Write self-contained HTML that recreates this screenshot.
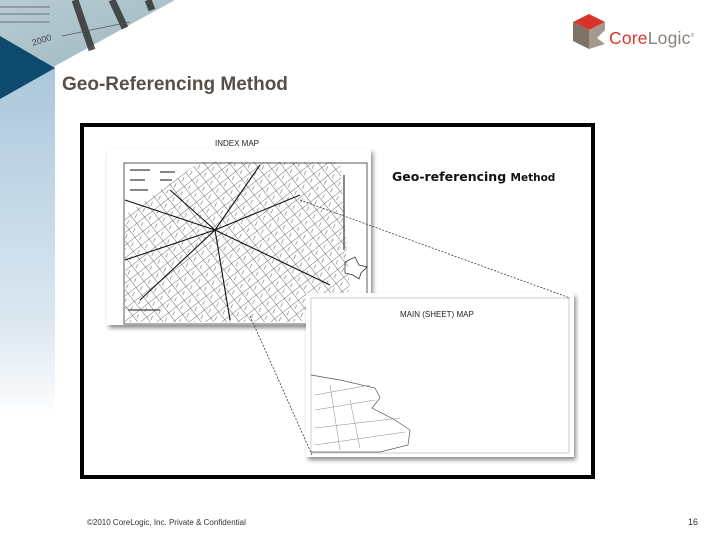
<!DOCTYPE html>
<html><head><meta charset="utf-8"><style>
*{margin:0;padding:0}
body{width:720px;height:540px;position:relative;overflow:hidden;background:#fff;font-family:"Liberation Sans",sans-serif}
.abs{position:absolute}
</style></head><body>
<svg class="abs" style="left:0;top:0" width="720" height="540">
<defs>
<linearGradient id="lb" x1="0" y1="0" x2="0" y2="1">
<stop offset="0" stop-color="#a9c6db"/><stop offset="0.55" stop-color="#dce8f1"/><stop offset="0.75" stop-color="#ffffff"/></linearGradient>
<linearGradient id="ph" x1="0" y1="0" x2="1" y2="1">
<stop offset="0" stop-color="#b7cbd2"/><stop offset="1" stop-color="#9fb8c0"/></linearGradient>
<pattern id="grid" width="10" height="10" patternUnits="userSpaceOnUse" patternTransform="rotate(-38)">
<path d="M0 0H10M0 0V10" stroke="#333" stroke-width="0.8" fill="none"/><path d="M2 5l4 -2" stroke="#555" stroke-width="0.6"/></pattern>
<filter id="sh"><feDropShadow dx="2" dy="3" stdDeviation="2" flood-color="#000" flood-opacity="0.45"/></filter>
</defs>
<rect x="0" y="60" width="55" height="480" fill="url(#lb)"/>
<polygon points="0,0 175,0 55,66 0,40" fill="url(#ph)"/>
<g stroke="#333" stroke-width="7" opacity="0.85"><line x1="75" y1="0" x2="92" y2="50"/><line x1="112" y1="0" x2="125" y2="28"/><line x1="148" y1="0" x2="152" y2="10"/></g>
<g stroke="#556" stroke-width="0.7" fill="none"><line x1="0" y1="7" x2="50" y2="7"/><line x1="0" y1="14" x2="50" y2="14"/><line x1="0" y1="22" x2="50" y2="22"/><line x1="62" y1="36" x2="130" y2="22"/></g>
<text x="33" y="46" font-size="9" fill="#445" transform="rotate(-18 33 46)">2000</text>
<polygon points="0,36 55,68 0,99" fill="#0d4a6e"/>
<rect x="82" y="125" width="511" height="352" fill="#fff" stroke="#000" stroke-width="4"/>
<text x="215" y="146" font-size="8" fill="#222">INDEX MAP</text>
<g filter="url(#sh)"><rect x="107" y="149" width="264" height="176" fill="#fff"/></g>
<rect x="124" y="163" width="243" height="161" fill="none" stroke="#333" stroke-width="0.8"/>
<polygon points="125,215 200,162 340,162 350,290 300,322 125,322" fill="url(#grid)" opacity="0.9"/>
<g stroke="#111" stroke-width="1.1" fill="none"><path d="M125,260 L215,230 L300,195 M170,190 L215,230 L230,320 M140,300 L215,230 L330,285 M125,200 L215,230 M260,165 L215,230"/></g>
<g stroke="#555" stroke-width="2" opacity="0.7"><line x1="130" y1="170" x2="150" y2="170"/><line x1="130" y1="180" x2="145" y2="180"/><line x1="130" y1="190" x2="148" y2="190"/><line x1="160" y1="172" x2="175" y2="172"/><line x1="160" y1="180" x2="172" y2="180"/><line x1="344" y1="175" x2="344" y2="250"/><line x1="128" y1="310" x2="160" y2="310"/></g>
<path d="M345,262 l10,-5 l4,8 l8,2 l-6,6 l-2,6 l-6,-4 l-8,-2z" fill="none" stroke="#333" stroke-width="0.8"/>
<text x="392" y="181" font-size="12.5" font-weight="bold" fill="#111" font-family="'DejaVu Sans',sans-serif">Geo-referencing <tspan font-size="10.5">Method</tspan></text>
<g filter="url(#sh)"><rect x="306" y="293" width="268" height="164" fill="#fff"/></g>
<rect x="311" y="298" width="258" height="155" fill="none" stroke="#aaa" stroke-width="0.6"/>
<text x="400" y="317" font-size="8" fill="#222">MAIN (SHEET) MAP</text>
<path d="M311,375 L340,380 L375,388 L380,398 L372,408 L395,420 L410,430 L408,445 L380,452 L311,452" fill="none" stroke="#555" stroke-width="0.7"/>
<g stroke="#888" stroke-width="0.5" fill="none"><path d="M315,395 L370,385 M315,410 L375,400 M315,428 L400,418 M330,385 L340,450 M350,400 L360,448 M315,445 L405,432"/></g>
<g stroke="#222" stroke-width="0.7" stroke-dasharray="2,1.5" fill="none"><line x1="300" y1="200" x2="570" y2="298"/><line x1="250" y1="316" x2="312" y2="455"/></g>
<polygon points="589,14 605,22 589,30 573,22" fill="#d9342b"/>
<polygon points="573,22 589,30 589,49 573,41" fill="#7d7468"/>
<polygon points="589,30 605,22 605,30 597,38 605,44 589,49" fill="#a49a8c"/>
</svg>
<div class="abs" style="left:609px;top:28px;font-size:17.5px;color:#d9342b;letter-spacing:0.2px">Core<span style="color:#8a8178">Logic</span><sup style="font-size:5px;color:#8a8178">®</sup></div>
<div class="abs" style="left:62px;top:74px;font-size:19px;font-weight:bold;color:#594f47">Geo-Referencing Method</div>
<div class="abs" style="left:87px;top:518px;font-size:8px;color:#333">©2010 CoreLogic, Inc. Private &amp; Confidential</div>
<div class="abs" style="left:688px;top:517px;font-size:9px;color:#333">16</div>
</body></html>
